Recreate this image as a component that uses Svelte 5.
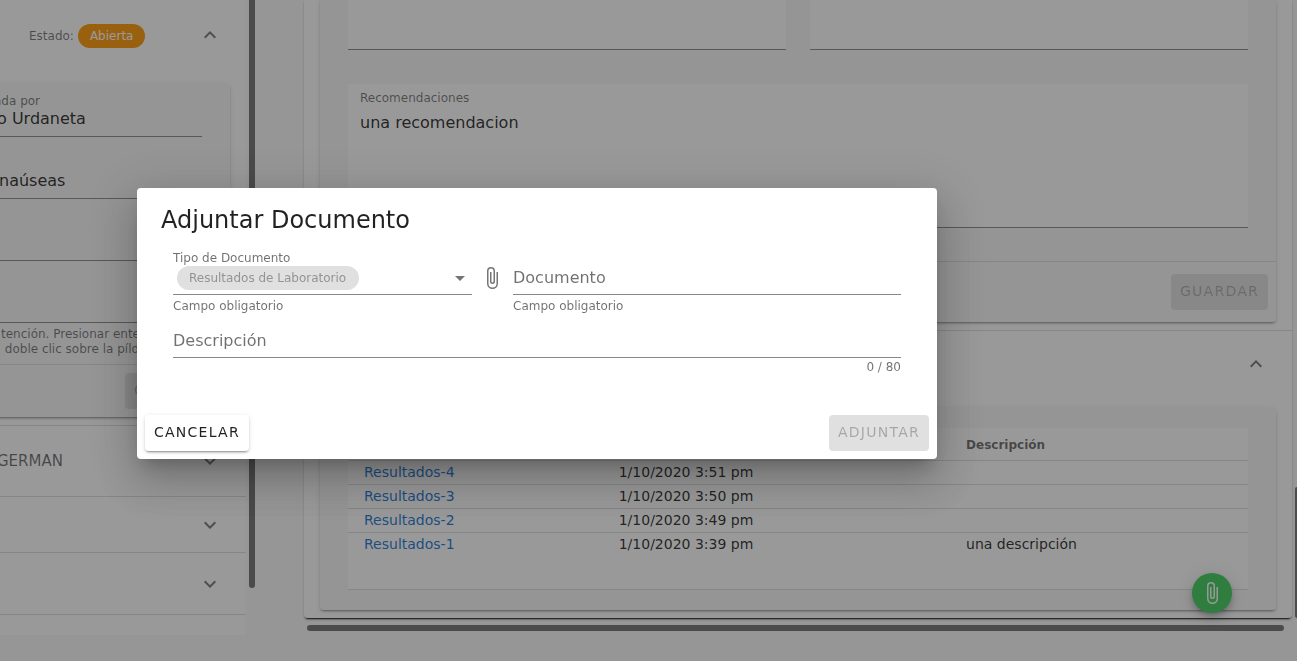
<script>
  const up = 'M7.41 15.41 12 10.83l4.59 4.58L18 14l-6-6-6 6z';
  const down = 'M7.41 8.58 12 13.17l4.59-4.59L18 10l-6 6-6-6z';
  const clip =
    'M16.5 6v11.5a4 4 0 0 1-4 4 4 4 0 0 1-4-4V5A2.5 2.5 0 0 1 11 2.5 2.5 2.5 0 0 1 13.5 5v10.5a1 1 0 0 1-1 1 1 1 0 0 1-1-1V6H10v9.5a2.5 2.5 0 0 0 2.5 2.5 2.5 2.5 0 0 0 2.5-2.5V5a4 4 0 0 0-4-4 4 4 0 0 0-4 4v12.5A5.5 5.5 0 0 0 12.5 23a5.5 5.5 0 0 0 5.5-5.5V6z';

  const rows = [
    { name: 'Resultados-4', date: '1/10/2020 3:51 pm', text: '' },
    { name: 'Resultados-3', date: '1/10/2020 3:50 pm', text: '' },
    { name: 'Resultados-2', date: '1/10/2020 3:49 pm', text: '' },
    { name: 'Resultados-1', date: '1/10/2020 3:39 pm', text: 'una descripción' }
  ];

  let documento = $state('');
  let descripcion = $state('');
  let recomendacion = $state('una recomendacion');
</script>

{#snippet icon(path)}
  <svg class="icon" viewBox="0 0 24 24" aria-hidden="true"><path d={path} /></svg>
{/snippet}

<div class="page">
  <aside class="side">
    <header class="state">
      <span class="small">Estado:</span>
      <span class="badge">Abierta</span>
      <button class="toggle" aria-label="Contraer">{@render icon(up)}</button>
    </header>
    <section class="card patient">
      <div class="fields">
        <div class="line first">
          <span class="small">ada por</span>
          <span class="value">o Urdaneta</span>
        </div>
        <div class="line"><span class="value word">naúseas</span></div>
        <div class="line"></div>
        <div class="line"></div>
        <p class="hint">tención. Presionar enter<br />&nbsp;doble clic sobre la píldora</p>
      </div>
      <footer class="foot side-foot"><button class="btn off" disabled>Guardar</button></footer>
    </section>
    <div class="row tall"><span class="name">GERMAN</span>{@render icon(down)}</div>
    <div class="row">{@render icon(down)}</div>
    <div class="row mid">{@render icon(down)}</div>
    <div class="row last"></div>
  </aside>
  <div class="thumb-y"></div>

  <div class="content">
    <main class="sheet">
      <section class="card plan">
        <div class="pair">
          <textarea aria-label="Diagnóstico"></textarea>
          <textarea aria-label="Tratamiento"></textarea>
        </div>
        <div class="area">
          <label class="small" for="rec">Recomendaciones</label>
          <textarea id="rec" bind:value={recomendacion}></textarea>
        </div>
        <footer class="foot"><button class="btn off" disabled>Guardar</button></footer>
      </section>
      <header class="section-head">
        <button class="toggle" aria-label="Contraer">{@render icon(up)}</button>
      </header>
      <section class="card docs">
        <table>
          <thead>
            <tr><th class="c1"></th><th class="c2"></th><th>Descripción</th></tr>
          </thead>
          <tbody>
            {#each rows as r}
              <tr><td><a href="#{r.name}">{r.name}</a></td><td>{r.date}</td><td>{r.text}</td></tr>
            {/each}
          </tbody>
        </table>
        <div class="table-end"></div>
      </section>
    </main>
    <div class="thumb-x"></div>
    <button class="fab" aria-label="Adjuntar documento">{@render icon(clip)}</button>
  </div>
  <div class="thumb-page"></div>
</div>

<div class="overlay">
  <div class="dialog" role="dialog" aria-modal="true" aria-labelledby="title">
    <h2 id="title">Adjuntar Documento</h2>
    <form class="form">
      <div class="type">
        <label class="small" for="tipo">Tipo de Documento</label>
        <div class="control">
          <select id="tipo" disabled><option>Resultados de Laboratorio</option></select>
          <svg class="icon" viewBox="0 0 24 24" aria-hidden="true"><path d="M7 10l5 5 5-5z" /></svg>
        </div>
        <span class="small note">Campo obligatorio</span>
      </div>
      <span class="clip">{@render icon(clip)}</span>
      <div class="file">
        <div class="control stack">
          <label for="doc">Documento</label>
          <input id="doc" bind:value={documento} />
        </div>
        <span class="small note">Campo obligatorio</span>
      </div>
      <div class="desc">
        <div class="control stack">
          <label for="des">Descripción</label>
          <input id="des" maxlength="80" bind:value={descripcion} />
        </div>
        <span class="small count">{descripcion.length} / 80</span>
      </div>
    </form>
    <div class="actions">
      <button class="btn raised">Cancelar</button>
      <button class="btn off" disabled>Adjuntar</button>
    </div>
  </div>
</div>

<style>
  :global(body) {
    overflow: hidden;
    background: #f9f9f9;
    font: 16px/20px 'DejaVu Sans', sans-serif;
    color: rgba(0, 0, 0, 0.87);
  }
  * { box-sizing: border-box; }
  button, input, select, textarea { font: inherit; color: inherit; border: 0; margin: 0; padding: 0; background: none; outline: 0; }
  .icon { width: 24px; height: 24px; flex: none; display: block; fill: #757575; }
  .small { font-size: 12px; line-height: 16px; color: rgba(0, 0, 0, 0.56); }
  .page { display: flex; min-height: 100vh; align-items: flex-start; }
  .card {
    background: #f8f8f8;
    border-radius: 4px;
    box-shadow: 0 3px 1px -2px rgba(0, 0, 0, 0.2), 0 2px 2px rgba(0, 0, 0, 0.14), 0 1px 5px rgba(0, 0, 0, 0.12);
  }
  .btn {
    height: 36px;
    padding: 0 9px 2px;
    border-radius: 4px;
    font-size: 14px;
    letter-spacing: 1.25px;
    text-transform: uppercase;
  }
  .off { background: #e0e0e0; color: rgba(0, 0, 0, 0.26); }
  .raised {
    background: #fff;
    box-shadow: 0 3px 1px -2px rgba(0, 0, 0, 0.2), 0 2px 2px rgba(0, 0, 0, 0.14), 0 1px 5px rgba(0, 0, 0, 0.12);
  }

  .side { flex: 0 0 246px; overflow: hidden; background: #fff; }
  .state { display: flex; align-items: center; gap: 4px; height: 84px; padding: 0 24px 12px 29px; }
  .badge { padding: 0 12px; border-radius: 12px; background: #ff9800; color: #fff; font-size: 12px; line-height: 24px; }
  .toggle { margin-left: auto; padding-bottom: 2px; }
  .patient { margin: 0 16px 8px -8px; }
  .fields { padding: 8px 28px 0 2px; }
  .line { display: flex; flex-direction: column; justify-content: flex-end; height: 62px; border-bottom: 1px solid #878787; padding-bottom: 7px; }
  .first { height: 45px; }
  .first .value { padding-left: 3px; }
  .word { padding-left: 5px; }
  .hint { margin: 0; padding: 4px 0 7px 7px; font-size: 12px; line-height: 15px; color: rgba(0, 0, 0, 0.56); white-space: nowrap; }
  .foot { display: flex; justify-content: flex-end; padding: 12px 8px; border-top: 1px solid #dcdcdc; }
  .side-foot { padding: 8px; }
  .row { display: flex; align-items: center; justify-content: flex-end; height: 56px; padding-right: 24px; border-bottom: 1px solid #dcdcdc; }
  .tall { height: 72px; border-top: 1px solid #dcdcdc; }
  .mid { height: 62px; }
  .last { height: 20px; border: 0; }
  .name { margin: 0 auto 0 -3px; font-size: 15px; color: rgba(0, 0, 0, 0.6); }
  .thumb-y { flex: 0 0 6px; height: 588px; margin-left: 3px; border-radius: 0 0 3px 3px; background: #6f6f6f; }

  .content { position: relative; flex: 1; margin-left: 49px; }
  .sheet {
    background: #fff;
    padding-bottom: 8px;
    border-radius: 0 0 4px 4px;
    box-shadow: 0 3px 1px -2px rgba(0, 0, 0, 0.8), 0 2px 2px rgba(0, 0, 0, 0.3);
  }
  .plan { margin: 0 16px; border-radius: 0 0 4px 4px; }
  .pair { display: grid; grid-template-columns: 1fr 1fr; gap: 24px; padding: 0 28px; }
  textarea { display: block; width: 100%; height: 50px; resize: none; background: #fff; border-bottom: 1px solid #878787; }
  .area { display: flex; flex-direction: column; margin: 34px 28px 33px; padding-top: 6px; background: #fff; }
  .area label { padding-left: 12px; }
  .area textarea { height: 122px; padding: 7px 12px; }
  .section-head { display: flex; align-items: center; height: 78px; margin-top: 8px; padding: 0 24px 10px; border-top: 1px solid #dcdcdc; }
  .docs { margin: 0 16px; padding: 20px 28px; }
  table { width: 100%; table-layout: fixed; border-collapse: collapse; background: #fff; font-size: 14px; }
  .c1 { width: 28.3%; }
  .c2 { width: 38.6%; }
  th { height: 32px; padding: 2px 16px 0; text-align: left; font-size: 12px; color: rgba(0, 0, 0, 0.6); }
  td { height: 24px; padding: 0 16px; line-height: 20px; }
  tr { border-bottom: 1px solid #dcdcdc; }
  tbody tr:last-child { border: 0; }
  a { color: #1976d2; text-decoration: none; }
  .table-end { height: 34px; background: #fff; border-bottom: 1px solid #dcdcdc; }
  .thumb-x { height: 6px; margin: 7px 8px 0 3px; border-radius: 3px; background: #6f6f6f; }
  .thumb-page { flex: 0 0 2px; height: 131px; margin: 487px 0 0 3px; border-radius: 3px 0 0 3px; background: #6f6f6f; }
  .fab {
    position: absolute;
    right: 60px;
    bottom: 18px;
    display: grid;
    place-items: center;
    width: 40px;
    height: 40px;
    border-radius: 50%;
    background: #3bce5b;
    box-shadow: 0 3px 5px -1px rgba(0, 0, 0, 0.2), 0 6px 10px rgba(0, 0, 0, 0.14), 0 1px 18px rgba(0, 0, 0, 0.12);
  }
  .fab .icon { fill: #fff; }

  .overlay {
    position: fixed;
    inset: 0;
    display: flex;
    align-items: center;
    justify-content: center;
    padding: 0 223px 14px 0;
    background: rgba(33, 33, 33, 0.46);
  }
  .dialog {
    width: 100%;
    max-width: 800px;
    background: #fff;
    border-radius: 4px;
    box-shadow: 0 11px 15px -7px rgba(0, 0, 0, 0.2), 0 24px 38px 3px rgba(0, 0, 0, 0.14), 0 9px 46px 8px rgba(0, 0, 0, 0.12);
  }
  h2 { margin: 0; padding: 16px 24px 14px; font-size: 24px; line-height: 32px; font-weight: 400; }
  .form { display: grid; grid-template-columns: 299fr 41px 388fr; padding: 0 36px; }
  .type, .file, .desc { display: flex; flex-direction: column; min-width: 0; }
  .control { display: flex; align-items: center; justify-content: space-between; height: 29px; padding: 0 0 4px 4px; border-bottom: 1px solid #878787; }
  select {
    appearance: none;
    height: 24px;
    padding: 0 12px;
    border-radius: 12px;
    background: #e0e0e0;
    color: #949494;
    font-size: 12px;
    opacity: 1;
  }
  .note { margin-top: 3px; }
  .clip { display: grid; justify-items: center; align-content: start; padding: 16px 2px 0 0; }
  .file { padding-top: 16px; }
  .stack { display: grid; grid-template-columns: 1fr; padding-left: 0; }
  .stack label, .stack input { grid-area: 1 / 1; min-width: 0; }
  .stack label { color: rgba(0, 0, 0, 0.56); }
  .desc { grid-column: 1 / -1; padding-top: 15px; }
  .count { align-self: flex-end; margin-top: 1px; }
  .actions { display: flex; justify-content: space-between; padding: 40px 8px 8px; }
</style>
